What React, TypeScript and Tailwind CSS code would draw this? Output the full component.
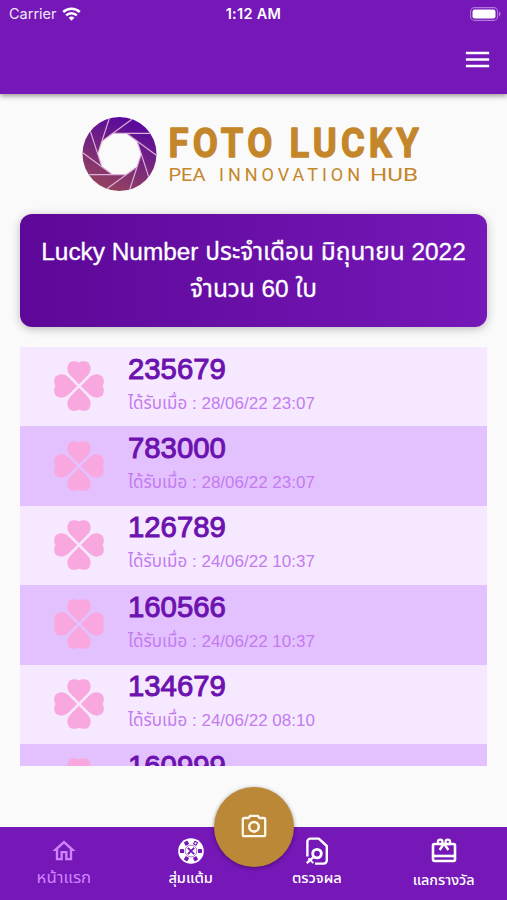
import { MdOutlineHome, MdMenu } from 'react-icons/md';

interface LuckyItem {
    number: string;
    receivedAt: string;
}

const items: LuckyItem[] = [
    { number: '235679', receivedAt: '28/06/22 23:07' },
    { number: '783000', receivedAt: '28/06/22 23:07' },
    { number: '126789', receivedAt: '24/06/22 10:37' },
    { number: '160566', receivedAt: '24/06/22 10:37' },
    { number: '134679', receivedAt: '24/06/22 08:10' },
    { number: '160999', receivedAt: '24/06/22 08:10' },
];

function StatusBar() {
    return (
        <div className="flex h-[27px] items-center justify-between pl-[9px] pr-[6px] text-white">
            <div className="flex w-[117px] items-center gap-[5px]">
                <span className="text-[14.5px] opacity-90">Carrier</span>
                <svg width="19" height="14" viewBox="0 0 19 14" fill="none" stroke="currentColor" strokeWidth="2.5">
                    <path d="M1.2 5a12 12 0 0 1 16.6 0" />
                    <path d="M4.2 8.4a7.6 7.6 0 0 1 10.6 0" />
                    <path d="M9.5 13.8 6.6 10.8a4.2 4.2 0 0 1 5.8 0z" fill="currentColor" stroke="none" />
                </svg>
            </div>
            <span className="text-[14.5px] font-semibold tracking-[0.3px]">1:12 AM</span>
            <div className="flex w-[120px] justify-end">
                <svg width="31" height="14" viewBox="0 0 31 14">
                    <rect x="0.6" y="0.6" width="27" height="12.8" rx="4" fill="none" stroke="#b278dd" strokeWidth="1.1" />
                    <rect x="2.5" y="2.5" width="23" height="9" rx="2.2" fill="white" />
                    <path d="M29 4.6c2 .7 2 4.1 0 4.8z" fill="#b278dd" />
                </svg>
            </div>
        </div>
    );
}

function Logo() {
    const blades = [0, 1, 2, 3, 4, 5, 6, 7, 8, 9];
    return (
        <svg width="345" height="76" viewBox="0 0 345 76" className="shrink-0 font-[Roboto,sans-serif]">
            <defs>
                <linearGradient id="shutter" x1="0.7" y1="0" x2="0.3" y2="1">
                    <stop offset="0.1" stopColor="#5b0b9b" />
                    <stop offset="1" stopColor="#96465a" />
                </linearGradient>
            </defs>
            <circle cx="38.5" cy="38" r="37" fill="url(#shutter)" />
            {/* hole: regular decagon, apothem 20.7 */}
            <polygon
                points="31.8,17.3 45.2,17.3 56.1,25.2 60.3,38 56.1,50.8 45.2,58.7 31.8,58.7 20.9,50.8 16.7,38 20.9,25.2"
                fill="#fafafa"
            />
            <g stroke="#dcb0d8" strokeWidth="1.2">
                {blades.map((b) => (
                    <line key={b} x1="34" y1="17.3" x2="69" y2="17.3" transform={`rotate(${b * 36} 38.5 38)`} />
                ))}
            </g>
            <g fill="#c4862a" stroke="#c4862a" strokeWidth="1.3" strokeLinejoin="round" fontSize="40" fontWeight="700">
                <text transform="translate(87.5 41) scale(0.91 1)" textLength="114" lengthAdjust="spacing">FOTO</text>
                <text transform="translate(208.5 41) scale(0.91 1)" textLength="142" lengthAdjust="spacing">LUCKY</text>
            </g>
            <g fill="#c4862a" fontSize="18">
                <text x="87.5" y="65" textLength="37" lengthAdjust="spacingAndGlyphs">PEA</text>
                <text x="138" y="65" textLength="141" lengthAdjust="spacing">INNOVATION</text>
                <text x="289" y="65" textLength="48" lengthAdjust="spacingAndGlyphs">HUB</text>
            </g>
        </svg>
    );
}

function Clover() {
    const petals = [0, 90, 180, 270];
    return (
        <svg width="50" height="50" viewBox="0 0 50 50" fill="#f9a8df" className="mb-[1px] shrink-0">
            {petals.map((angle) => (
                <path
                    key={angle}
                    transform={`rotate(${angle} 25 25)`}
                    d="M25 23.2 17.4 15.6C14.8 12.9 13.3 10.4 13.3 7.2 13.3 5.6 13.8 5.4 14.2 3.8 14.8 1.2 17.6.2 20 .2c2 0 3.8.2 5 1.3C26.2.4 28 .2 30 .2c2.4 0 5.2 1 5.8 3.6.4 1.6.9 1.8.9 3.4 0 3.2-1.5 5.7-4.1 8.4z"
                />
            ))}
        </svg>
    );
}

function ChipIcon() {
    const notches = [0, 60, 120, 180, 240, 300];
    return (
        <svg width="26" height="26" viewBox="0 0 26 26">
            <circle cx="13" cy="13" r="12.8" fill="white" />
            {notches.map((angle) => (
                <rect key={angle} x="20" y="11" width="4" height="4" rx="0.6" fill="#7617b8" transform={`rotate(${angle} 13 13)`} />
            ))}
            <circle cx="13" cy="13" r="5.9" fill="none" stroke="#7617b8" strokeWidth="0.6" />
            <path d="m9.8 9.8 6.4 6.4m0-6.4-6.4 6.4" stroke="#7617b8" strokeWidth="1.9" />
            <circle cx="17.5" cy="5.2" r="1" fill="white" />
        </svg>
    );
}

function CheckIcon() {
    return (
        <svg width="24" height="28" viewBox="0 0 24 28" fill="none" stroke="white" strokeWidth="2.4" strokeLinejoin="round">
            <path d="M2.4 19.5V4.6a3 3 0 0 1 3-3h8.4l8 7.4v14.6a3 3 0 0 1-3 3H10" />
            <circle cx="12" cy="16.6" r="4.3" strokeWidth="2.8" />
            <path d="m9 19.6-7.2 6.6" />
            <path d="m3.4 21.4 5 4.8" strokeWidth="1.8" />
        </svg>
    );
}

function GiftIcon() {
    return (
        <svg width="26" height="26" viewBox="0 0 26 26" fill="none" stroke="white" strokeWidth="2.6" strokeLinejoin="round">
            <rect x="2" y="6" width="22" height="17" rx="1.4" />
            <path d="M2 18h22" />
            <circle cx="9.2" cy="3.9" r="2.3" strokeWidth="2.2" />
            <circle cx="16.8" cy="3.9" r="2.3" strokeWidth="2.2" />
            <path d="M13 5.6 8.6 12M13 5.6l4.4 6.4" strokeWidth="2.4" />
        </svg>
    );
}

function CameraIcon() {
    return (
        <svg width="26" height="24" viewBox="0 0 26 24" fill="none" stroke="#fff8ea" strokeWidth="2.3" strokeLinejoin="round">
            <path d="M3.2 4h4.4l1.6-2.2h7.6L18.4 4h4.4a1.4 1.4 0 0 1 1.4 1.4v15.4a1.4 1.4 0 0 1-1.4 1.4H3.2a1.4 1.4 0 0 1-1.4-1.4V5.4A1.4 1.4 0 0 1 3.2 4z" />
            <circle cx="13" cy="12.8" r="4.8" strokeWidth="2.6" />
        </svg>
    );
}

export default function App() {
    return (
        <div className="flex h-[900px] w-[507px] flex-col overflow-hidden bg-[#fafafa] font-['Liberation_Sans','Noto_Sans_Thai','Noto_Sans',sans-serif]">
            <header className="h-[94px] shrink-0 bg-[#7617b8] font-[Inter,sans-serif] shadow-[0_2px_5px_rgba(0,0,0,0.4)]">
                <StatusBar />
                <div className="flex h-[65px] items-center justify-end pr-[14px] text-white">
                    <MdMenu size={31} />
                </div>
            </header>

            <main className="flex flex-1 flex-col px-[20px]">
                <div className="flex h-[120px] items-center pl-[61px]">
                    <Logo />
                </div>

                <div className="flex h-[113px] shrink-0 flex-col items-center justify-center rounded-[12px] bg-linear-to-r from-[#5d0898] to-[#7617b8] pb-[2px] text-[24.4px] leading-[37px] text-white shadow-[0_2px_10px_rgba(0,0,0,0.25)] [-webkit-text-stroke:0.3px_white]">
                    <p className="whitespace-nowrap">Lucky Number ประจำเดือน มิถุนายน 2022</p>
                    <p>จำนวน 60 ใบ</p>
                </div>

                <div className="mt-[20px] h-[419px] shrink-0 overflow-hidden">
                    {items.map((item) => (
                        <div key={item.number} className="flex h-[79.4px] items-center bg-[#f6e9ff] pl-[34px] even:bg-[#e3c1ff]">
                            <Clover />
                            <div className="ml-[24px] pt-[1px]">
                                <p className="text-[29.3px] leading-[33px] text-[#6c12ae] [-webkit-text-stroke:1px_#6c12ae]">{item.number}</p>
                                <p className="text-[17px] leading-[38px] text-[#c37bf0]">ได้รับเมื่อ : {item.receivedAt}</p>
                            </div>
                        </div>
                    ))}
                </div>
            </main>

            <nav className="relative grid h-[73px] shrink-0 grid-cols-4 bg-[#7617b8] text-[14.6px] font-medium leading-[22px] text-white">
                <div className="flex flex-col items-center gap-[2px] pl-[1px] pt-[10px] text-[#cf83ff]">
                    <MdOutlineHome size={28} />
                    <span className="whitespace-nowrap text-[16.8px] font-normal">หน้าแรก</span>
                </div>
                <div className="flex flex-col items-center gap-[3px] pl-[1px] pt-[11px]">
                    <ChipIcon />
                    <span>สุ่มแต้ม</span>
                </div>
                <div className="flex flex-col items-center gap-[2px] pt-[10px]">
                    <CheckIcon />
                    <span>ตรวจผล</span>
                </div>
                <div className="flex flex-col items-center gap-[5px] pt-[11px]">
                    <GiftIcon />
                    <span className="text-[14.4px]">แลกรางวัล</span>
                </div>
                <button className="absolute left-[214px] top-[-40px] flex size-[80px] items-center justify-center rounded-full bg-[#bb8838] pb-[2px] shadow-[0_1px_4px_rgba(0,0,0,0.4)]">
                    <CameraIcon />
                </button>
            </nav>
        </div>
    );
}
